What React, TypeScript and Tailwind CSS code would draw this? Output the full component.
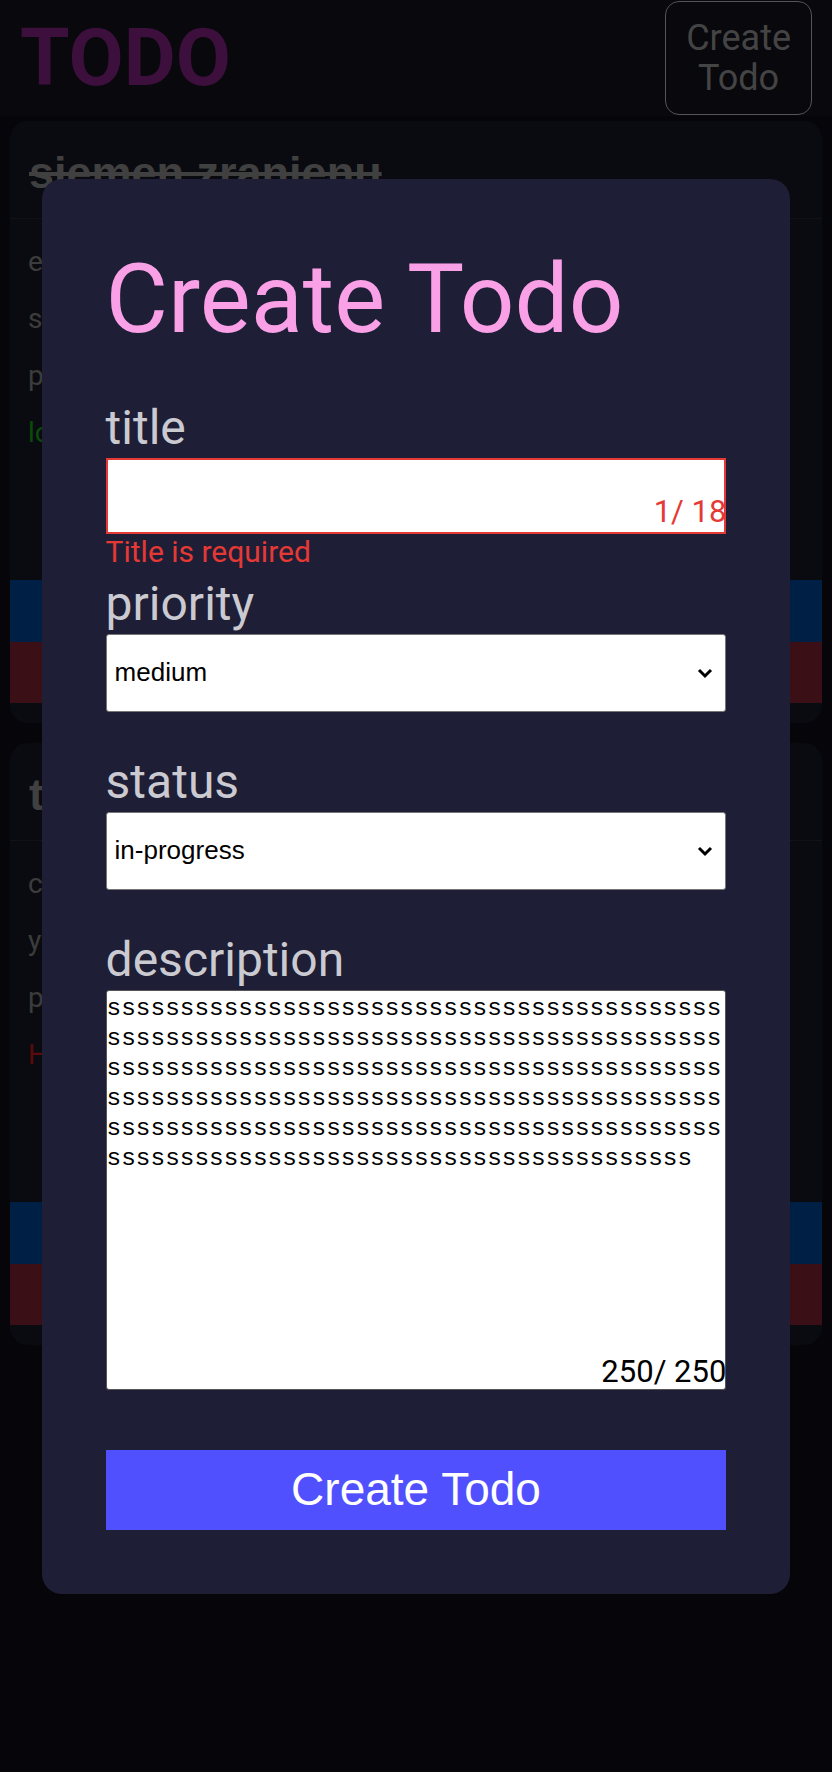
import React, { useState } from "react";

type Todo = {
  title: string;
  done: boolean;
  lines: string[];
  accent: { text: string; color: string };
};

const TODOS: Todo[] = [
  {
    title: "siemen zranienu",
    done: true,
    lines: ["eeeeeeeeeeee", "status: done", "priority: low"],
    accent: { text: "low", color: "text-[#149414]" },
  },
  {
    title: "testowe zadanie",
    done: false,
    lines: ["cos tam do zrobienia", "yyyyyyyyyyy", "priority: high"],
    accent: { text: "High", color: "text-[#b41414]" },
  },
];

const DESCRIPTION = "s".repeat(250);

function TodoCard({ todo }: { todo: Todo }) {
  return (
    <div className="overflow-hidden rounded-[18px] bg-[#141620] pb-5">
      <div className="h-[98px] border-b border-[#22222c] px-[19px] pt-[26px]">
        <h2
          className={
            "text-[45px] font-bold leading-[normal] text-[#808080] " +
            (todo.done ? "line-through" : "")
          }
          style={{ fontFamily: '"Liberation Sans", Arial, sans-serif' }}
        >
          {todo.title}
        </h2>
      </div>
      <div className="px-[18px] pt-[14px] text-[28px] leading-[57px] text-[#787878]">
        {todo.lines.map((l) => (
          <div key={l}>{l}</div>
        ))}
        <div className={todo.accent.color}>{todo.accent.text}</div>
      </div>
      <div className="mt-[119px] flex flex-col text-[28px] text-white">
        <button className="h-[62px] bg-[#003e8a]">Edit</button>
        <button className="h-[61px] bg-[#741e2a]">Delete</button>
      </div>
    </div>
  );
}

function Field({
  label,
  error,
  children,
}: {
  label: string;
  error?: string;
  children: React.ReactNode;
}) {
  return (
    <div>
      <label className="block text-[48px] leading-[normal] text-[#cacad0]">{label}</label>
      <div className="relative mt-[2px]">{children}</div>
      <div className="h-[35px] text-[30px] leading-[normal] text-[#e53935]">{error}</div>
    </div>
  );
}

function Chevron() {
  return (
    <svg
      className="pointer-events-none absolute right-[13px] top-1/2 -translate-y-1/2"
      width="16"
      height="11"
      viewBox="0 0 16 11"
      fill="none"
    >
      <path d="M2 2.5 L8 8.5 L14 2.5" stroke="#000" strokeWidth="3" />
    </svg>
  );
}

function Select({
  value,
  onChange,
  options,
}: {
  value: string;
  onChange: (v: string) => void;
  options: string[];
}) {
  return (
    <>
      <select
        value={value}
        onChange={(e) => onChange(e.target.value)}
        className="block h-[78px] w-full appearance-none rounded-[3px] border border-[#767676] bg-white pl-2 text-[26px] text-black"
        style={{ fontFamily: '"Liberation Sans", Arial, sans-serif' }}
      >
        {options.map((o) => (
          <option key={o} value={o}>
            {o}
          </option>
        ))}
      </select>
      <Chevron />
    </>
  );
}

export default function App() {
  const [title, setTitle] = useState("");
  const [priority, setPriority] = useState("medium");
  const [status, setStatus] = useState("in-progress");
  const [desc, setDesc] = useState(DESCRIPTION);

  return (
    <div
      className="min-h-screen bg-[#0a0a14]"
      style={{ fontFamily: "Roboto, 'Noto Sans', sans-serif" }}
    >
      {/* page behind the dialog */}
      <header className="flex items-center justify-between bg-[#10101a] px-5 py-px">
        <h1 className="text-[80px] font-bold leading-[normal] text-[#781e78]">TODO</h1>
        <button className="rounded-[14px] border border-[#aaaaaa] px-5 py-4 text-[36px] leading-[40px] text-[#888888]">
          Create
          <br />
          Todo
        </button>
      </header>
      <main className="flex flex-col gap-5 px-2.5 pt-[5px]">
        {TODOS.map((t) => (
          <TodoCard key={t.title} todo={t} />
        ))}
      </main>

      {/* dialog */}
      <div className="fixed inset-0 flex items-center justify-center bg-black/50">
        <form
          className="w-[90%] rounded-[20px] bg-[#1e1e36] p-16"
          onSubmit={(e) => e.preventDefault()}
        >
          <h1 className="mb-11 text-[96px] leading-[normal] text-[#f9a0e6]">Create Todo</h1>

          <div className="flex flex-col gap-[6px]">
            <Field label="title" error="Title is required">
              <input
                value={title}
                onChange={(e) => setTitle(e.target.value)}
                className="block h-[76px] w-full border-2 border-[#e53935] bg-white px-2 text-[26px] text-black outline-none"
              />
              <span className="absolute bottom-1 right-0 text-[31px] leading-[normal] text-[#e53935]">
                1/ 18
              </span>
            </Field>

            <Field label="priority">
              <Select value={priority} onChange={setPriority} options={["low", "medium", "high"]} />
            </Field>

            <Field label="status">
              <Select
                value={status}
                onChange={setStatus}
                options={["todo", "in-progress", "done"]}
              />
            </Field>

            <Field label="description">
              <textarea
                value={desc}
                onChange={(e) => setDesc(e.target.value.slice(0, 250))}
                className="block h-[400px] w-full resize-none rounded-[3px] border border-[#555555] bg-white px-0 pt-[3px] text-[24.4px] leading-[30px] text-black outline-none"
                style={{ fontFamily: '"Liberation Mono", monospace' }}
              />
              <span className="absolute bottom-0 right-0 text-[31px] leading-[normal] text-black">
                {desc.length}/ 250
              </span>
            </Field>
          </div>

          <button
            type="submit"
            className="mt-[25px] h-[80px] w-full bg-[#5050ff] text-[46px] text-white"
            style={{ fontFamily: '"Liberation Sans", Arial, sans-serif' }}
          >
            Create Todo
          </button>
        </form>
      </div>
    </div>
  );
}
